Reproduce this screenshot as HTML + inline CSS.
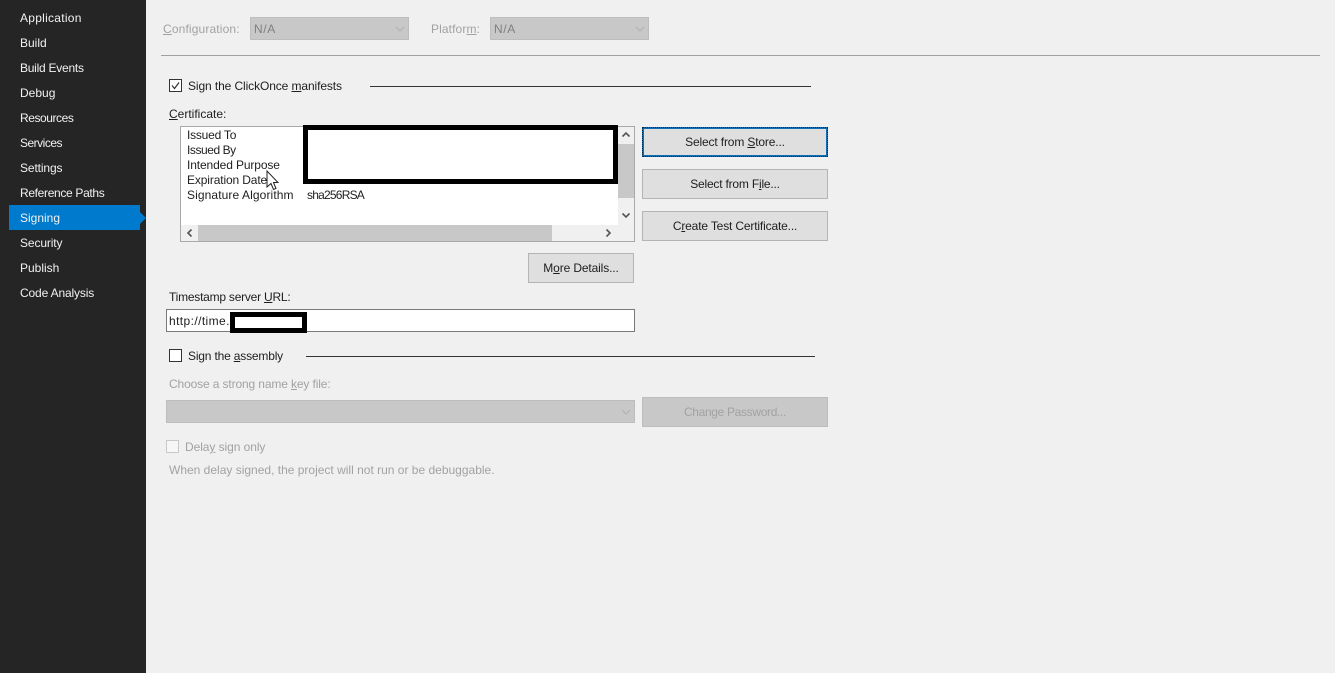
<!DOCTYPE html>
<html><head><meta charset="utf-8"><style>
html,body{margin:0;padding:0;width:1335px;height:673px;overflow:hidden;background:#f0f0f0;font-family:"Liberation Sans",sans-serif;font-size:12px;color:#1e1e1e}
div,svg{position:absolute;box-sizing:border-box}
.t{white-space:nowrap;line-height:16px;height:16px}
.n{color:#f1f1f1;left:20px}
.g{color:#a2a2a2}
.b{background:#dfdfdf;border:1px solid #b4b4b4;text-align:center;line-height:28px}
u{text-underline-offset:1px}
</style></head><body>
<div style="left:0;top:0;width:146px;height:673px;background:#252526"></div>
<div style="left:9px;top:205px;width:131px;height:25px;background:#007acc"></div>
<svg style="left:140px;top:212px" width="6" height="12"><path d="M0 0L6 6L0 12Z" fill="#007acc"/></svg>
<div class="t n" style="top:10px;letter-spacing:.27px">Application</div>
<div class="t n" style="top:35px">Build</div>
<div class="t n" style="top:60px;letter-spacing:-.25px">Build Events</div>
<div class="t n" style="top:85px">Debug</div>
<div class="t n" style="top:110px;letter-spacing:-.44px">Resources</div>
<div class="t n" style="top:135px;letter-spacing:-.5px">Services</div>
<div class="t n" style="top:160px;letter-spacing:-.12px">Settings</div>
<div class="t n" style="top:185px;letter-spacing:-.33px">Reference Paths</div>
<div class="t n" style="top:210px">Signing</div>
<div class="t n" style="top:235px;letter-spacing:-.12px">Security</div>
<div class="t n" style="top:260px">Publish</div>
<div class="t n" style="top:285px;letter-spacing:-.15px">Code Analysis</div>

<div class="t g" style="left:163px;top:21px;letter-spacing:.14px"><u>C</u>onfiguration:</div>
<div style="left:250px;top:17px;width:159px;height:23px;background:#c8c8c8;border:1px solid #bdbdbd"></div>
<div class="t" style="left:254px;top:21px;color:#808080;letter-spacing:.6px">N/A</div>
<svg style="left:395px;top:26px" width="10" height="6"><path d="M1 1L5 5L9 1" fill="none" stroke="#b0b0b0"/></svg>
<div class="t g" style="left:431px;top:21px;letter-spacing:.11px">Platfor<u>m</u>:</div>
<div style="left:490px;top:17px;width:159px;height:23px;background:#c8c8c8;border:1px solid #bdbdbd"></div>
<div class="t" style="left:494px;top:21px;color:#808080;letter-spacing:.6px">N/A</div>
<svg style="left:635px;top:26px" width="10" height="6"><path d="M1 1L5 5L9 1" fill="none" stroke="#b0b0b0"/></svg>
<div style="left:161px;top:55px;width:1159px;height:1px;background:#a0a0a0"></div>

<div style="left:169px;top:79px;width:13px;height:13px;background:#fff;border:1px solid #333"></div>
<svg style="left:169px;top:79px" width="13" height="13"><path d="M3 6.5L5.5 9.5L10 3.5" fill="none" stroke="#333" stroke-width="1.2"/></svg>
<div class="t" style="left:188px;top:78px;letter-spacing:-.1px">Sign the ClickOnce <u>m</u>anifests</div>
<div style="left:370px;top:86px;width:441px;height:1px;background:#333"></div>
<div class="t" style="left:169px;top:106px"><u>C</u>ertificate:</div>

<div style="left:180px;top:126px;width:455px;height:116px;background:#fff;border:1px solid #a9a9a9"></div>
<div class="t" style="left:187px;top:127px;letter-spacing:-.22px">Issued To</div>
<div class="t" style="left:187px;top:142px;letter-spacing:-.44px">Issued By</div>
<div class="t" style="left:187px;top:157px;letter-spacing:-.12px">Intended Purpose</div>
<div class="t" style="left:187px;top:172px;letter-spacing:-.13px">Expiration Date</div>
<div class="t" style="left:187px;top:187px;letter-spacing:.1px">Signature Algorithm</div>
<div class="t" style="left:307px;top:187px;letter-spacing:-.78px">sha256RSA</div>
<div style="left:303px;top:125px;width:315px;height:59px;background:#fff;border:5px solid #000"></div>
<div style="left:618px;top:127px;width:16px;height:98px;background:#f0f0f0"></div>
<div style="left:618px;top:144px;width:16px;height:54px;background:#c8c8c8"></div>
<div style="left:181px;top:225px;width:453px;height:16px;background:#f0f0f0"></div>
<div style="left:198px;top:225px;width:354px;height:16px;background:#c8c8c8"></div>
<svg style="left:621px;top:131px" width="10" height="7"><path d="M1.5 5.5L5 2L8.5 5.5" fill="none" stroke="#555" stroke-width="1.6"/></svg>
<svg style="left:621px;top:212px" width="10" height="7"><path d="M1.5 1.5L5 5L8.5 1.5" fill="none" stroke="#555" stroke-width="1.6"/></svg>
<svg style="left:186px;top:228px" width="7" height="10"><path d="M5.5 1.5L2 5L5.5 8.5" fill="none" stroke="#555" stroke-width="1.6"/></svg>
<svg style="left:605px;top:228px" width="7" height="10"><path d="M1.5 1.5L5 5L1.5 8.5" fill="none" stroke="#555" stroke-width="1.6"/></svg>
<svg style="left:266px;top:170px" width="13" height="21"><path d="M1 1V17L5 13.5L7.5 19.5L10 18.5L7.5 12.5H12Z" fill="#fff" stroke="#222" stroke-width="1"/></svg>

<div class="b" style="left:642px;top:127px;width:186px;height:30px;border:2px solid #0e6cb0;letter-spacing:-.15px"><span style="position:relative;top:-1px">Select from <u>S</u>tore...</span></div>
<div style="left:642px;top:127px;width:186px;height:30px;border:1px dotted #0a2a44"></div>
<div class="b" style="left:642px;top:169px;width:186px;height:30px;letter-spacing:-.2px">Select from F<u>i</u>le...</div>
<div class="b" style="left:642px;top:211px;width:186px;height:30px;letter-spacing:-.16px">C<u>r</u>eate Test Certificate...</div>
<div class="b" style="left:528px;top:253px;width:106px;height:30px;letter-spacing:-.13px">M<u>o</u>re Details...</div>

<div class="t" style="left:169px;top:289px;letter-spacing:-.23px">Timestamp server <u>U</u>RL:</div>
<div style="left:166px;top:309px;width:469px;height:23px;background:#fff;border:1px solid #7a7a7a"></div>
<div class="t" style="left:169px;top:313px;letter-spacing:.4px">http://time.</div>
<div style="left:230px;top:312px;width:77px;height:21px;background:#fff;border:5px solid #000"></div>

<div style="left:169px;top:349px;width:13px;height:13px;background:#fff;border:1px solid #333"></div>
<div class="t" style="left:188px;top:348px;letter-spacing:-.18px">Sign the <u>a</u>ssembly</div>
<div style="left:306px;top:356px;width:509px;height:1px;background:#333"></div>
<div class="t g" style="left:169px;top:376px;letter-spacing:-.13px">Choose a strong name <u>k</u>ey file:</div>
<div style="left:166px;top:400px;width:469px;height:23px;background:#c8c8c8;border:1px solid #bdbdbd"></div>
<svg style="left:621px;top:409px" width="10" height="6"><path d="M1 1L5 5L9 1" fill="none" stroke="#b0b0b0"/></svg>
<div class="b g" style="left:642px;top:397px;width:186px;height:30px;background:#c8c8c8;border-color:#bdbdbd;letter-spacing:-.33px">Change Password...</div>
<div style="left:166px;top:440px;width:13px;height:13px;background:#f6f6f6;border:1px solid #c8c8c8"></div>
<div class="t g" style="left:185px;top:439px;letter-spacing:-.07px">Dela<u>y</u> sign only</div>
<div class="t g" style="left:169px;top:462px">When delay signed, the project will not run or be debuggable.</div>
</body></html>
